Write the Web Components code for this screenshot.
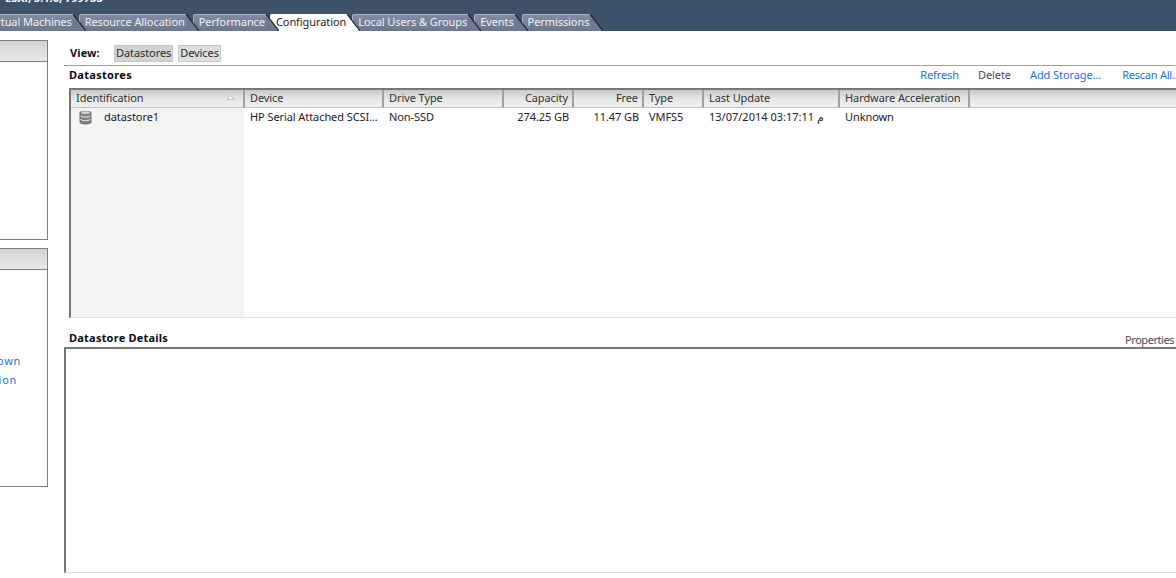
<!DOCTYPE html>
<html><head><meta charset="utf-8"><title>Configuration</title>
<style>
html,body{margin:0;padding:0;background:#fff;width:1176px;height:578px;overflow:hidden}
body{font:11px "Noto Sans","DejaVu Sans",sans-serif;color:#222}
</style></head><body>
<vs-app>
  <vs-titlebar slot="top" title-text="ESXi, 5.1.0, 799733">
    <vs-tab style="margin-right:-7px">Virtual Machines</vs-tab>
    <vs-tab>Resource Allocation</vs-tab>
    <vs-tab style="margin-right:-9px">Performance</vs-tab>
    <vs-tab active style="margin-right:-8px">Configuration</vs-tab>
    <vs-tab style="margin-right:-7px">Local Users &amp; Groups</vs-tab>
    <vs-tab>Events</vs-tab>
    <vs-tab>Permissions</vs-tab>
  </vs-titlebar>
  <vs-sidebar slot="side">
    <vs-panel style="height:200px"></vs-panel>
    <vs-panel style="height:239px">
      <vs-sidelink>Shut down</vs-sidelink>
      <vs-sidelink>Configuration</vs-sidelink>
    </vs-panel>
  </vs-sidebar>
  <vs-content slot="main">
    <vs-viewbar>
      <vs-viewbtn selected>Datastores</vs-viewbtn>
      <vs-viewbtn>Devices</vs-viewbtn>
    </vs-viewbar>
    <vs-section heading="Datastores">
      <vs-link>Refresh</vs-link><vs-link muted style="margin-left:-1px">Delete</vs-link><vs-link style="margin-left:-1px">Add Storage...</vs-link><vs-link style="letter-spacing:-.25px;margin-left:1px">Rescan All...</vs-link>
    </vs-section>
    <vs-grid></vs-grid>
    <vs-details heading="Datastore Details"><vs-link muted style="letter-spacing:-.45px">Properties</vs-link></vs-details>
  </vs-content>
</vs-app>
<script>
function def(name,css,html,extra){
  customElements.define(name,class extends HTMLElement{
    constructor(){super();this.attachShadow({mode:'open'}).innerHTML='<style>'+css+'</style>'+(typeof html==='function'?html(this):html);}
    connectedCallback(){if(extra)extra(this);}
  });
}
def('vs-app',`:host{display:block;width:1176px;height:578px;overflow:hidden}
.row{display:flex}`,`<slot name="top"></slot><div class="row"><slot name="side"></slot><slot name="main"></slot></div>`);

def('vs-titlebar',`:host{display:block;height:31px;background:#3d5169;overflow:hidden}
.t{height:14px;overflow:hidden;padding-left:5px;color:#fff;font-weight:700;font-size:11px;line-height:14px;white-space:nowrap}
.t span{display:block;margin-top:-9px}
.tabs{display:flex;margin-left:-19px;height:17px}`,
`<div class="t"><span id="x"></span></div><div class="tabs"><slot></slot></div>`,
el=>{el.shadowRoot.getElementById('x').textContent=el.getAttribute('title-text');
  [...el.querySelectorAll('vs-tab')].forEach((t,i,a)=>t.style.zIndex=a.length-i);});

def('vs-tab',`:host{display:flex;position:relative;height:17px;margin-right:-6px;flex:none;color:#eef0f4;letter-spacing:-.08px}
.b{height:16px;line-height:14px;padding:0 1px 0 6px;background:linear-gradient(#7f8aa3,#6c7690);border-top:1px solid #a9b0bf;border-top-left-radius:2px;white-space:nowrap;box-shadow:inset 1px 0 0 #a9b0bf}
svg{display:block;flex:none}
:host([active]){color:#222}
:host([active]) .b{background:#fff;border-top-color:#fff;box-shadow:none}`,
el=>{const a=el.hasAttribute('active');return `<div class="b"><slot></slot></div><svg width="13" height="17" viewBox="0 0 13 17"><polygon points="0,0 0,17 13,17" fill="${a?'#fff':'#6f7992'}"/><line x1="0" y1="0" x2="13" y2="17" stroke="#1a2430" stroke-width="1.1"/></svg>`});

def('vs-sidebar',`:host{display:flex;flex-direction:column;gap:8px;flex:none;width:48px;padding-top:9px}`,`<slot></slot>`);
def('vs-panel',`:host{display:block;box-sizing:border-box;border:1px solid #808080;border-left:0;width:48px}
.h{height:20px;background:linear-gradient(#d0d2d2,#e9e9e9);border-bottom:1px solid #808080}
.c{padding-top:83px;display:flex;flex-direction:column;gap:4px}`,`<div class="h"></div><div class="c"><slot></slot></div>`);
def('vs-sidelink',`:host{display:flex;justify-content:flex-end;width:21px;height:15px;line-height:15px;overflow:hidden;color:#1e6bf5;white-space:nowrap}
:host(:last-child){width:17px}
span{flex:none;letter-spacing:.7px}`,`<span><slot></slot></span>`);

def('vs-content',`:host{display:block;flex:none;width:1112px;margin-left:16px}`,`<slot></slot>`);
def('vs-viewbar',`:host{display:flex;align-items:center;gap:5px;height:17px;padding:14px 0 3px 6px}
b{font-weight:700;color:#111;width:39px;flex:none;margin-top:-2px;letter-spacing:.1px}`,`<b>View:</b><slot></slot>`);
def('vs-viewbtn',`:host{display:block;height:17px;box-sizing:border-box;line-height:14px;padding:0 1px;border:1px solid #c4c8cc;background:#dcdee0;color:#2c2c2c;letter-spacing:-.08px;white-space:nowrap}
:host([selected]){background:#d0d3d6}`,`<slot></slot>`);
def('vs-section',`:host{display:flex;justify-content:space-between;align-items:center;box-sizing:border-box;border-top:1px solid #a0a0a0;height:23px;padding:0 0 5px 5px;width:1112px;overflow:hidden}
b{color:#0a0a14;font-weight:700;letter-spacing:.3px}
.l{display:flex;gap:20px;flex:none;margin-right:-4px}`,
el=>`<b>${el.getAttribute('heading')}</b><div class="l"><slot></slot></div>`);
def('vs-link',`:host{display:block;white-space:nowrap;color:#1e6bf5;letter-spacing:-.08px}
:host([muted]){color:#4a4a5c}`,`<slot></slot>`);

const cols=[['Identification',174,'l'],['Device',139,'l'],['Drive Type',120,'l'],['Capacity',70,'r'],['Free',70,'r'],['Type',60,'l'],['Last Update',136,'l'],['Hardware Acceleration',130,'l'],['',208,'l']];
const tmpl=cols.map(c=>c[1]+'px').join(' ');
const row=[['datastore1','l'],['HP Serial Attached SCSI...','l'],['Non-SSD','l'],['274.25 GB','r'],['11.47 GB','r'],['VMFS5','l'],['13/07/2014 03:17:11 م','l'],['Unknown','l'],['','l']];
def('vs-grid',`:host{display:block;box-sizing:border-box;height:230px;margin-left:5px;width:1107px;border-top:2px solid #777;border-left:2px solid #777;border-bottom:1px solid #e0e0e0;position:relative;overflow:hidden;letter-spacing:-.08px}
.h,.r{display:grid;grid-template-columns:${tmpl}}
.h{height:18px}
.h div{box-sizing:border-box;height:18px;line-height:15px;padding:0 5px;background:linear-gradient(#c8c8c8,#e8e8e8 55%,#f0f0f0);border-right:2px solid #a0a0a0;border-bottom:1px solid #c0c0c0;white-space:nowrap;position:relative;color:#333}
.h div:last-child{border-right:0}
.h .r1{text-align:right;padding-right:4px}
.body{height:209px;background:linear-gradient(90deg,#f4f4f4 173px,#fff 173px)}
.r{height:19px;line-height:18px;color:#222}
.r div{padding:0 5px;white-space:nowrap;overflow:hidden}
.r .r1{text-align:right}
.r .first{display:flex;align-items:flex-start;padding-left:8px;gap:12px}
.arr{position:absolute;right:8px;top:5px}
.first svg{flex:none;margin-top:2px}`,
()=>`<div class="h">${cols.map((c,i)=>`<div class="${c[2]=='r'?'r1':''}">${c[0]}${i==0?'<svg class="arr" width="9" height="5" viewBox="0 0 9 5"><path d="M0.5 4.5 4.5 0.5 8.5 4.5Z" fill="#f4f4f4" stroke="#aaa" stroke-width=".7"/></svg>':''}</div>`).join('')}</div>
<div class="body"><div class="r">${row.map((c,i)=>i==0?`<div class="first"><svg width="13" height="15" viewBox="0 0 13 15"><path d="M1 2.5C1 .9 12 .9 12 2.5V12.5C12 14.4 1 14.4 1 12.5Z" fill="#7f8484" stroke="#4e5252" stroke-width=".8"/><ellipse cx="6.5" cy="2.6" rx="4.6" ry="1.4" fill="#d2d4d4"/><path d="M1.4 6c1.5 1.5 8.7 1.5 10.2 0M1.4 9.5c1.5 1.5 8.7 1.5 10.2 0" fill="none" stroke="#e4e6e6" stroke-width="1"/></svg><span>${c[0]}</span></div>`:`<div class="${c[1]=='r'?'r1':''}">${c[0]}</div>`).join('')}</div></div>`);

def('vs-details',`:host{display:block;width:1112px}
.top{display:flex;justify-content:space-between;align-items:center;height:29px;padding:9px 0 0 5px;box-sizing:border-box}
b{color:#0a0a14;font-weight:700;letter-spacing:.22px}
.l{flex:none;margin-right:2px;padding-top:4px}
.box{box-sizing:border-box;height:226px;border-top:2px solid #777;border-left:2px solid #777;border-bottom:1px solid #ddd}`,
el=>`<div class="top"><b>${el.getAttribute('heading')}</b><div class="l"><slot></slot></div></div><div class="box"></div>`);
</script>
</body></html>
